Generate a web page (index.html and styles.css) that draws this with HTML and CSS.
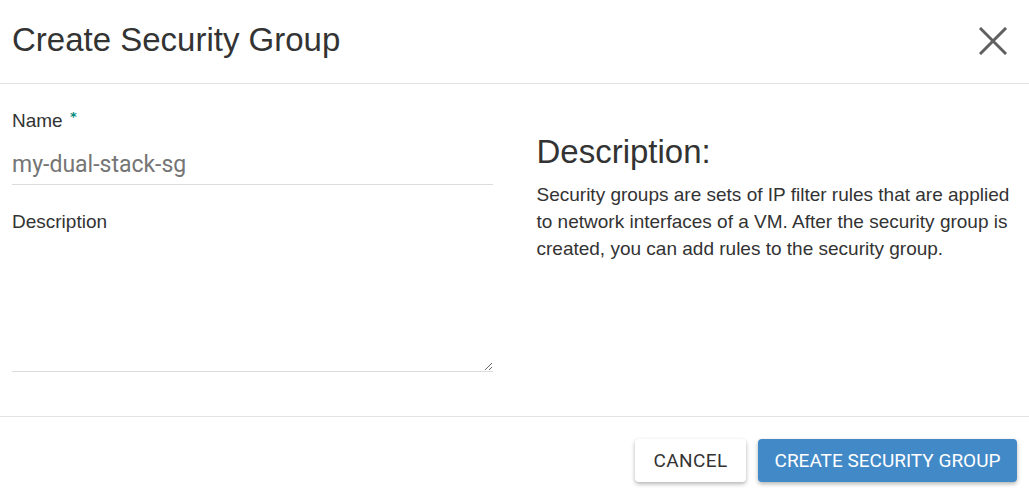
FILE: index.html
```html
<!DOCTYPE html>
<html lang="en">
<head>
  <meta charset="UTF-8">
  <meta name="viewport" content="width=device-width, initial-scale=1.0">
  <title>Create Security Group</title>
  <link rel="stylesheet" href="styles.css">
</head>
<body>
  <div class="modal">
    <div class="modal-header">
      <h1>Create Security Group</h1>
      <button class="close-btn" aria-label="Close">
        <svg width="28" height="28" viewBox="0 0 28 28">
          <path d="M2 2 L26 26 M26 2 L2 26" stroke="#606060" stroke-width="3" stroke-linecap="square" fill="none"/>
        </svg>
      </button>
    </div>
    <div class="modal-body">
      <div class="form-col">
        <label class="field-label" for="sgName">Name <span class="required">*</span></label>
        <input class="text-input" type="text" id="sgName" placeholder="my-dual-stack-sg">
        <label class="field-label desc-label" for="sgDesc">Description</label>
        <textarea class="text-area" id="sgDesc"></textarea>
      </div>
      <div class="help-col">
        <h2>Description:</h2>
        <p>Security groups are sets of IP filter rules that are applied to network interfaces of a VM. After the security group is created, you can add rules to the security group.</p>
      </div>
    </div>
    <div class="modal-footer">
      <button class="btn btn-default">CANCEL</button>
      <button class="btn btn-primary">CREATE SECURITY GROUP</button>
    </div>
  </div>
</body>
</html>
```

FILE: styles.css
```css
body {
  margin: 0;
  background-color: #ffffff;
  color: #333333;
  font-family: "Liberation Sans", Arial, sans-serif;
}
.modal {
  width: 1029px;
}
.modal-header {
  height: 84px;
  display: flex;
  align-items: center;
  justify-content: space-between;
  padding: 0 22px 3px 12px;
  box-sizing: border-box;
  border-bottom: 1px solid #e3e3e3;
}
.modal-header h1 {
  margin: 0;
  font-size: 33px;
  font-weight: normal;
  color: #333333;
}
.close-btn {
  border: none;
  background: none;
  padding: 0;
  width: 28px;
  height: 28px;
  margin-top: 1px;
  cursor: pointer;
}
.close-btn svg {
  display: block;
}
.modal-body {
  display: grid;
  grid-template-columns: 1fr 1fr;
  column-gap: 44px;
  padding: 22px 12px 44px;
  border-bottom: 1px solid #e3e3e3;
}
.field-label {
  display: block;
  font-size: 19px;
  line-height: 22px;
  color: #333333;
}
.required {
  color: #00897b;
  font-family: "DejaVu Sans", sans-serif;
  font-size: 13px;
  font-weight: bold;
  vertical-align: 6px;
  margin-left: 2px;
}
.text-input {
  display: block;
  width: 100%;
  box-sizing: border-box;
  margin-top: 19px;
  padding: 0 0 6px;
  border: none;
  border-bottom: 1px solid #dcdcdc;
  font-family: Roboto, sans-serif;
  font-size: 23px;
  line-height: 27px;
  color: #333333;
  outline: none;
}
.text-input::placeholder {
  color: #757575;
}
.desc-label {
  margin-top: 26px;
}
.text-area {
  display: block;
  width: 100%;
  box-sizing: border-box;
  height: 135px;
  margin-top: 4px;
  padding: 0;
  border: none;
  border-bottom: 1px solid #dcdcdc;
  resize: vertical;
  font-family: Roboto, sans-serif;
  font-size: 19px;
  outline: none;
}
.help-col h2 {
  margin: 27px 0 0;
  font-size: 33px;
  font-weight: normal;
  color: #333333;
}
.help-col p {
  margin: 11px 0 0;
  font-size: 19px;
  line-height: 26.8px;
  color: #333333;
}
.modal-footer {
  display: flex;
  justify-content: flex-end;
  gap: 12px;
  padding: 22px 12px 13px;
}
.btn {
  height: 43px;
  border: none;
  border-radius: 4px;
  font-family: Roboto, sans-serif;
  font-size: 19px;
  cursor: pointer;
  box-shadow: 0 2px 4px rgba(0, 0, 0, 0.3);
}
.btn-default {
  width: 111px;
  background-color: #ffffff;
  color: #333333;
  letter-spacing: 0.4px;
}
.btn-primary {
  width: 259px;
  background-color: #4189c7;
  color: #ffffff;
}
```
